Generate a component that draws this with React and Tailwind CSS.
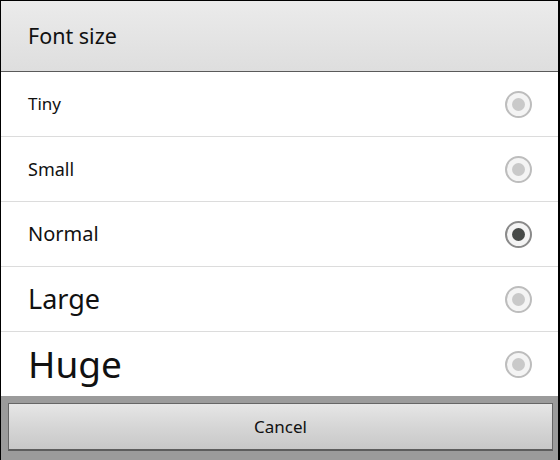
import React from "react";

const rows = [
  { label: "Tiny", cls: "text-[17px]", sel: false },
  { label: "Small", cls: "text-[18px]", sel: false },
  { label: "Normal", cls: "text-[20px]", sel: true },
  { label: "Large", cls: "text-[27px]", sel: false },
  { label: "Huge", cls: "text-[37px]", sel: false },
];

function Radio({ sel }) {
  return (
    <div
      className={`w-[27px] h-[27px] rounded-full border-2 flex items-center justify-center bg-[#f4f4f4] ${
        sel ? "border-[#8a8a8a]" : "border-[#bdbdbd]"
      }`}
    >
      <div
        className={`w-[13px] h-[13px] rounded-full ${sel ? "bg-[#474a48]" : "bg-[#c9c9c9]"}`}
      />
    </div>
  );
}

export default function App() {
  return (
    <div
      className="w-[560px] h-[460px] bg-black flex flex-col overflow-hidden"
      style={{ fontFamily: "'Noto Sans', 'Open Sans', sans-serif" }}
    >
      <div className="mt-[1px] ml-[1px] mr-[2px] flex-1 flex flex-col bg-white">
        <div className="h-[71px] shrink-0 bg-gradient-to-b from-[#ebebeb] to-[#dedede] flex items-center pl-[27px] text-[21.5px] text-[#111] border-b border-[#5a5a5a]">
          Font size
        </div>
        {rows.map((r, i) => (
          <div
            key={r.label}
            className={`${i < rows.length - 1 ? "h-[65px] border-b border-[#dcdcdc]" : "h-[64px]"} shrink-0 flex items-center justify-between pl-[27px] pr-[26px]`}
          >
            <span className={`${r.cls} text-[#111]`}>{r.label}</span>
            <Radio sel={r.sel} />
          </div>
        ))}
        <div className="flex-1 bg-[#9b9b9b] pt-[7px] pb-[9px] pl-[7px] pr-[5px] flex">
          <div className="flex-1 border border-[#666] border-b-2 border-b-[#5d5d5d] bg-gradient-to-b from-[#e6e6e6] via-[#d6d6d6] to-[#c8c8c8] flex items-center justify-center text-[17px] text-[#111]">
            Cancel
          </div>
        </div>
      </div>
    </div>
  );
}
